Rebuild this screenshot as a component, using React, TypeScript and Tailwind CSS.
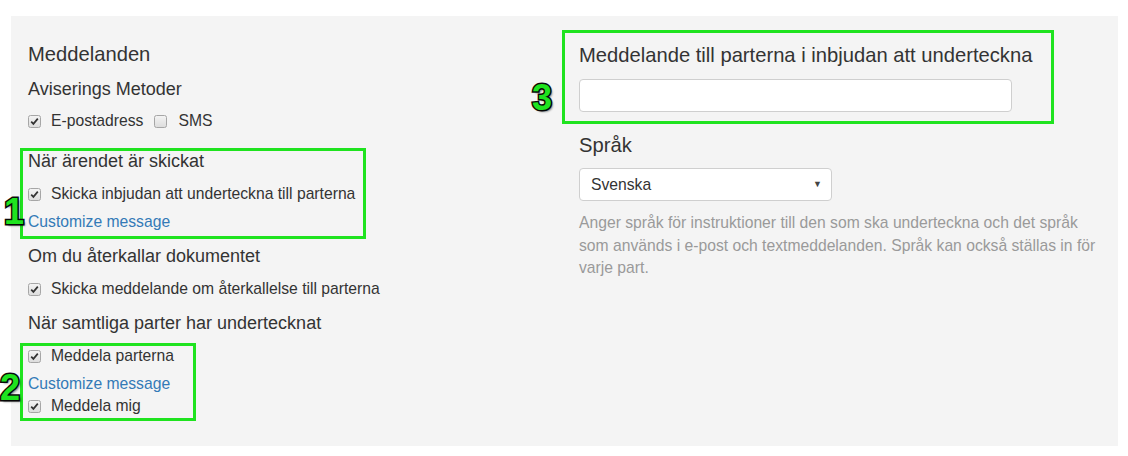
import React from 'react'

const font = { fontFamily: '"Liberation Sans", Arial, sans-serif' }

function Check({ checked = true }: { checked?: boolean }) {
  return (
    <svg width="13" height="13" viewBox="0 0 13 13" className="shrink-0">
      <defs>
        <linearGradient id="cbg" x1="0" y1="0" x2="0" y2="1">
          <stop offset="0" stopColor="#f4f4f4" />
          <stop offset="1" stopColor="#dcdcdc" />
        </linearGradient>
      </defs>
      <rect x="0.5" y="0.5" width="12" height="12" rx="2" fill="url(#cbg)" stroke="#a6a6a6" />
      {checked && <path d="M3.2 6.6 L5.4 8.9 L9.8 3.6" fill="none" stroke="#333" strokeWidth="1.7" />}
    </svg>
  )
}

function CheckRow({ label, className = '' }: { label: string; className?: string }) {
  return (
    <div className={`flex h-[22px] items-center gap-[10px] ${className}`}>
      <Check />
      <span>{label}</span>
    </div>
  )
}

function Badge({ n, className }: { n: string; className: string }) {
  return (
    <span
      className={`absolute text-[36px] font-bold leading-none text-[#1fe31f] [-webkit-text-stroke:3px_#0a0a0a] [paint-order:stroke_fill] [text-shadow:2px_2px_2px_rgba(0,0,0,0.45)] ${className}`}
    >
      {n}
    </span>
  )
}

export default function App() {
  return (
    <div style={font} className="relative h-[456px] w-[1128px] bg-white pl-[11px] pr-[10px] pt-[16px] text-[#333]">
      <div className="flex h-[430px] bg-[#f4f4f4]">
        {/* left column */}
        <div className="w-[551px] pl-[17px] text-[15.7px]">
          <div className="mt-[27px] text-[20.2px] leading-[22px]">Meddelanden</div>
          <div className="mt-[13px] text-[18px] leading-[22px]">Aviserings Metoder</div>
          <div className="mt-[10px] flex h-[22px] items-center">
            <Check />
            <span className="ml-[10px]">E-postadress</span>
            <span className="ml-[11px]">
              <Check checked={false} />
            </span>
            <span className="ml-[11px]">SMS</span>
          </div>

          <div className="-ml-[8px] mt-[16px] w-[346px] border-[3px] border-[#1fe31f] pb-[3px] pl-[5px]">
            <div className="text-[18px] leading-[20px]">När ärendet är skickat</div>
            <CheckRow className="mt-[12px]" label="Skicka inbjudan att underteckna till parterna" />
            <div className="mt-[6px] leading-[22px] text-[#337ab7]">Customize message</div>
          </div>

          <div className="mt-[6px] text-[18px] leading-[22px]">Om du återkallar dokumentet</div>
          <CheckRow className="mt-[11px]" label="Skicka meddelande om återkallelse till parterna" />
          <div className="mt-[12px] text-[18px] leading-[22px]">När samtliga parter har undertecknat</div>

          <div className="-ml-[8px] mt-[9px] w-[176px] border-[3px] border-[#1fe31f] pb-[2px] pl-[5px]">
            <div className="flex h-[20px] items-center gap-[10px]">
              <Check />
              <span>Meddela parterna</span>
            </div>
            <div className="mt-[8px] leading-[20px] text-[#337ab7]">Customize message</div>
            <div className="mt-[2px] flex h-[20px] items-center gap-[10px]">
              <Check />
              <span>Meddela mig</span>
            </div>
          </div>
        </div>

        {/* right column */}
        <div className="flex-1">
          <div className="mt-[14px] w-[492px] border-[3px] border-[#1fe31f] pb-[9px] pl-[14px] pt-[11px]">
            <div className="text-[20.2px] leading-[22px]">Meddelande till parterna i inbjudan att underteckna</div>
            <div className="mt-[13px] h-[33px] w-[433px] rounded-[4px] border border-[#cfcfcf] bg-white" />
          </div>
          <div className="pl-[17px]">
            <div className="mt-[10px] text-[20.2px] leading-[22px]">Språk</div>
            <div className="mt-[12px] flex h-[33px] w-[253px] items-center justify-between rounded-[4px] border border-[#cfcfcf] bg-white pl-[11px] pr-[9px] text-[15.7px]">
              <span>Svenska</span>
              <span className="text-[9px] text-[#444]">▼</span>
            </div>
            <p className="mt-[11px] text-[15.7px] leading-[22.5px] text-[#9a9a9a]">
              Anger språk för instruktioner till den som ska underteckna och det språk
              <br />
              som används i e-post och textmeddelanden. Språk kan också ställas in för
              <br />
              varje part.
            </p>
          </div>
        </div>
      </div>

      <Badge n="1" className="left-[4px] top-[194px]" />
      <Badge n="2" className="left-[0px] top-[370px]" />
      <Badge n="3" className="left-[532px] top-[80px]" />
    </div>
  )
}
